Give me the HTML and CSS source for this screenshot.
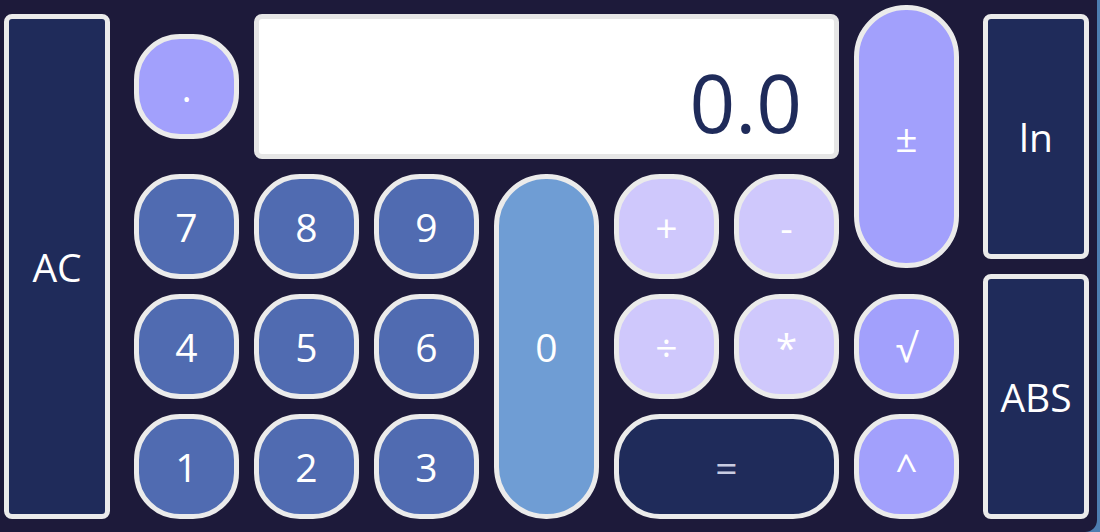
FILE: index.html
```html
<!DOCTYPE html>
<html>
<head>
    <title>Calculator</title>
    <link rel="stylesheet" href="styles.css">
</head>
<body>
    <div class="calc">
        <button class="key key-dark key-tall">AC</button>
        <div class="pad">
            <button class="key key-accent key-round dot">.</button>
            <div class="display">0.0</div>
            <button class="key key-accent key-pill sign">±</button>

            <button class="key key-num key-round">7</button>
            <button class="key key-num key-round">8</button>
            <button class="key key-num key-round">9</button>
            <button class="key key-zero key-pill zero">0</button>
            <button class="key key-op key-round">+</button>
            <button class="key key-op key-round">-</button>

            <button class="key key-num key-round">4</button>
            <button class="key key-num key-round">5</button>
            <button class="key key-num key-round">6</button>
            <button class="key key-op key-round">÷</button>
            <button class="key key-op key-round">*</button>
            <button class="key key-accent key-round">√</button>

            <button class="key key-num key-round">1</button>
            <button class="key key-num key-round">2</button>
            <button class="key key-num key-round">3</button>
            <button class="key key-dark key-round equals">=</button>
            <button class="key key-accent key-round">^</button>
        </div>
        <div class="side">
            <button class="key key-dark">ln</button>
            <button class="key key-dark">ABS</button>
        </div>
    </div>
</body>
</html>
```

FILE: styles.css
```css
body {
    margin: 0;
    background: #4d7db0;
    overflow: hidden;
}
.calc {
    box-sizing: border-box;
    width: 1097px;
    height: 532px;
    padding: 14px 0 0 4px;
    display: flex;
    align-items: flex-start;
    gap: 24px;
    background: #1d1a3a;
    border-bottom-right-radius: 12px;
}
.key {
    box-sizing: border-box;
    border: 5px solid #ebebeb;
    border-radius: 8px;
    color: #ffffff;
    font-family: 'Open Sans', 'Noto Sans', sans-serif;
    font-size: 39px;
    font-weight: 400;
    display: flex;
    align-items: center;
    justify-content: center;
    padding: 0;
    margin: 0;
    cursor: pointer;
}
.key-tall {
    width: 106px;
    height: 505px;
}
.key-dark {
    background: #1f2b5a;
}
.key-num {
    background: #506bb1;
}
.key-zero {
    background: #6f9dd4;
}
.key-op {
    background: #cfc8fc;
}
.key-accent {
    background: #a2a0fc;
}
.key-round {
    border-radius: 46px;
}
.key-pill {
    border-radius: 52px;
}
.pad {
    display: grid;
    grid-template-columns: repeat(7, 105px);
    grid-template-rows: 145px repeat(3, 105px);
    gap: 15px;
}
.dot {
    height: 105px;
    align-self: center;
}
.display {
    grid-column: 2 / 7;
    box-sizing: border-box;
    background: #ffffff;
    border: 5px solid #e6e6e6;
    border-radius: 8px;
    padding: 43px 32px 0 0;
    text-align: right;
    color: #1f2b5a;
    font-family: 'Open Sans', 'Noto Sans', sans-serif;
    font-size: 80px;
    line-height: 1;
}
.sign {
    grid-column: 7;
    grid-row: 1 / 3;
    height: 263px;
    margin-top: -9px;
}
.zero {
    grid-column: 4;
    grid-row: 2 / 5;
}
.equals {
    grid-column: 5 / 7;
    color: #c8cce2;
}
.side {
    width: 106px;
    height: 505px;
    display: flex;
    flex-direction: column;
    gap: 15px;
}
.side .key {
    flex: 1;
}
```
